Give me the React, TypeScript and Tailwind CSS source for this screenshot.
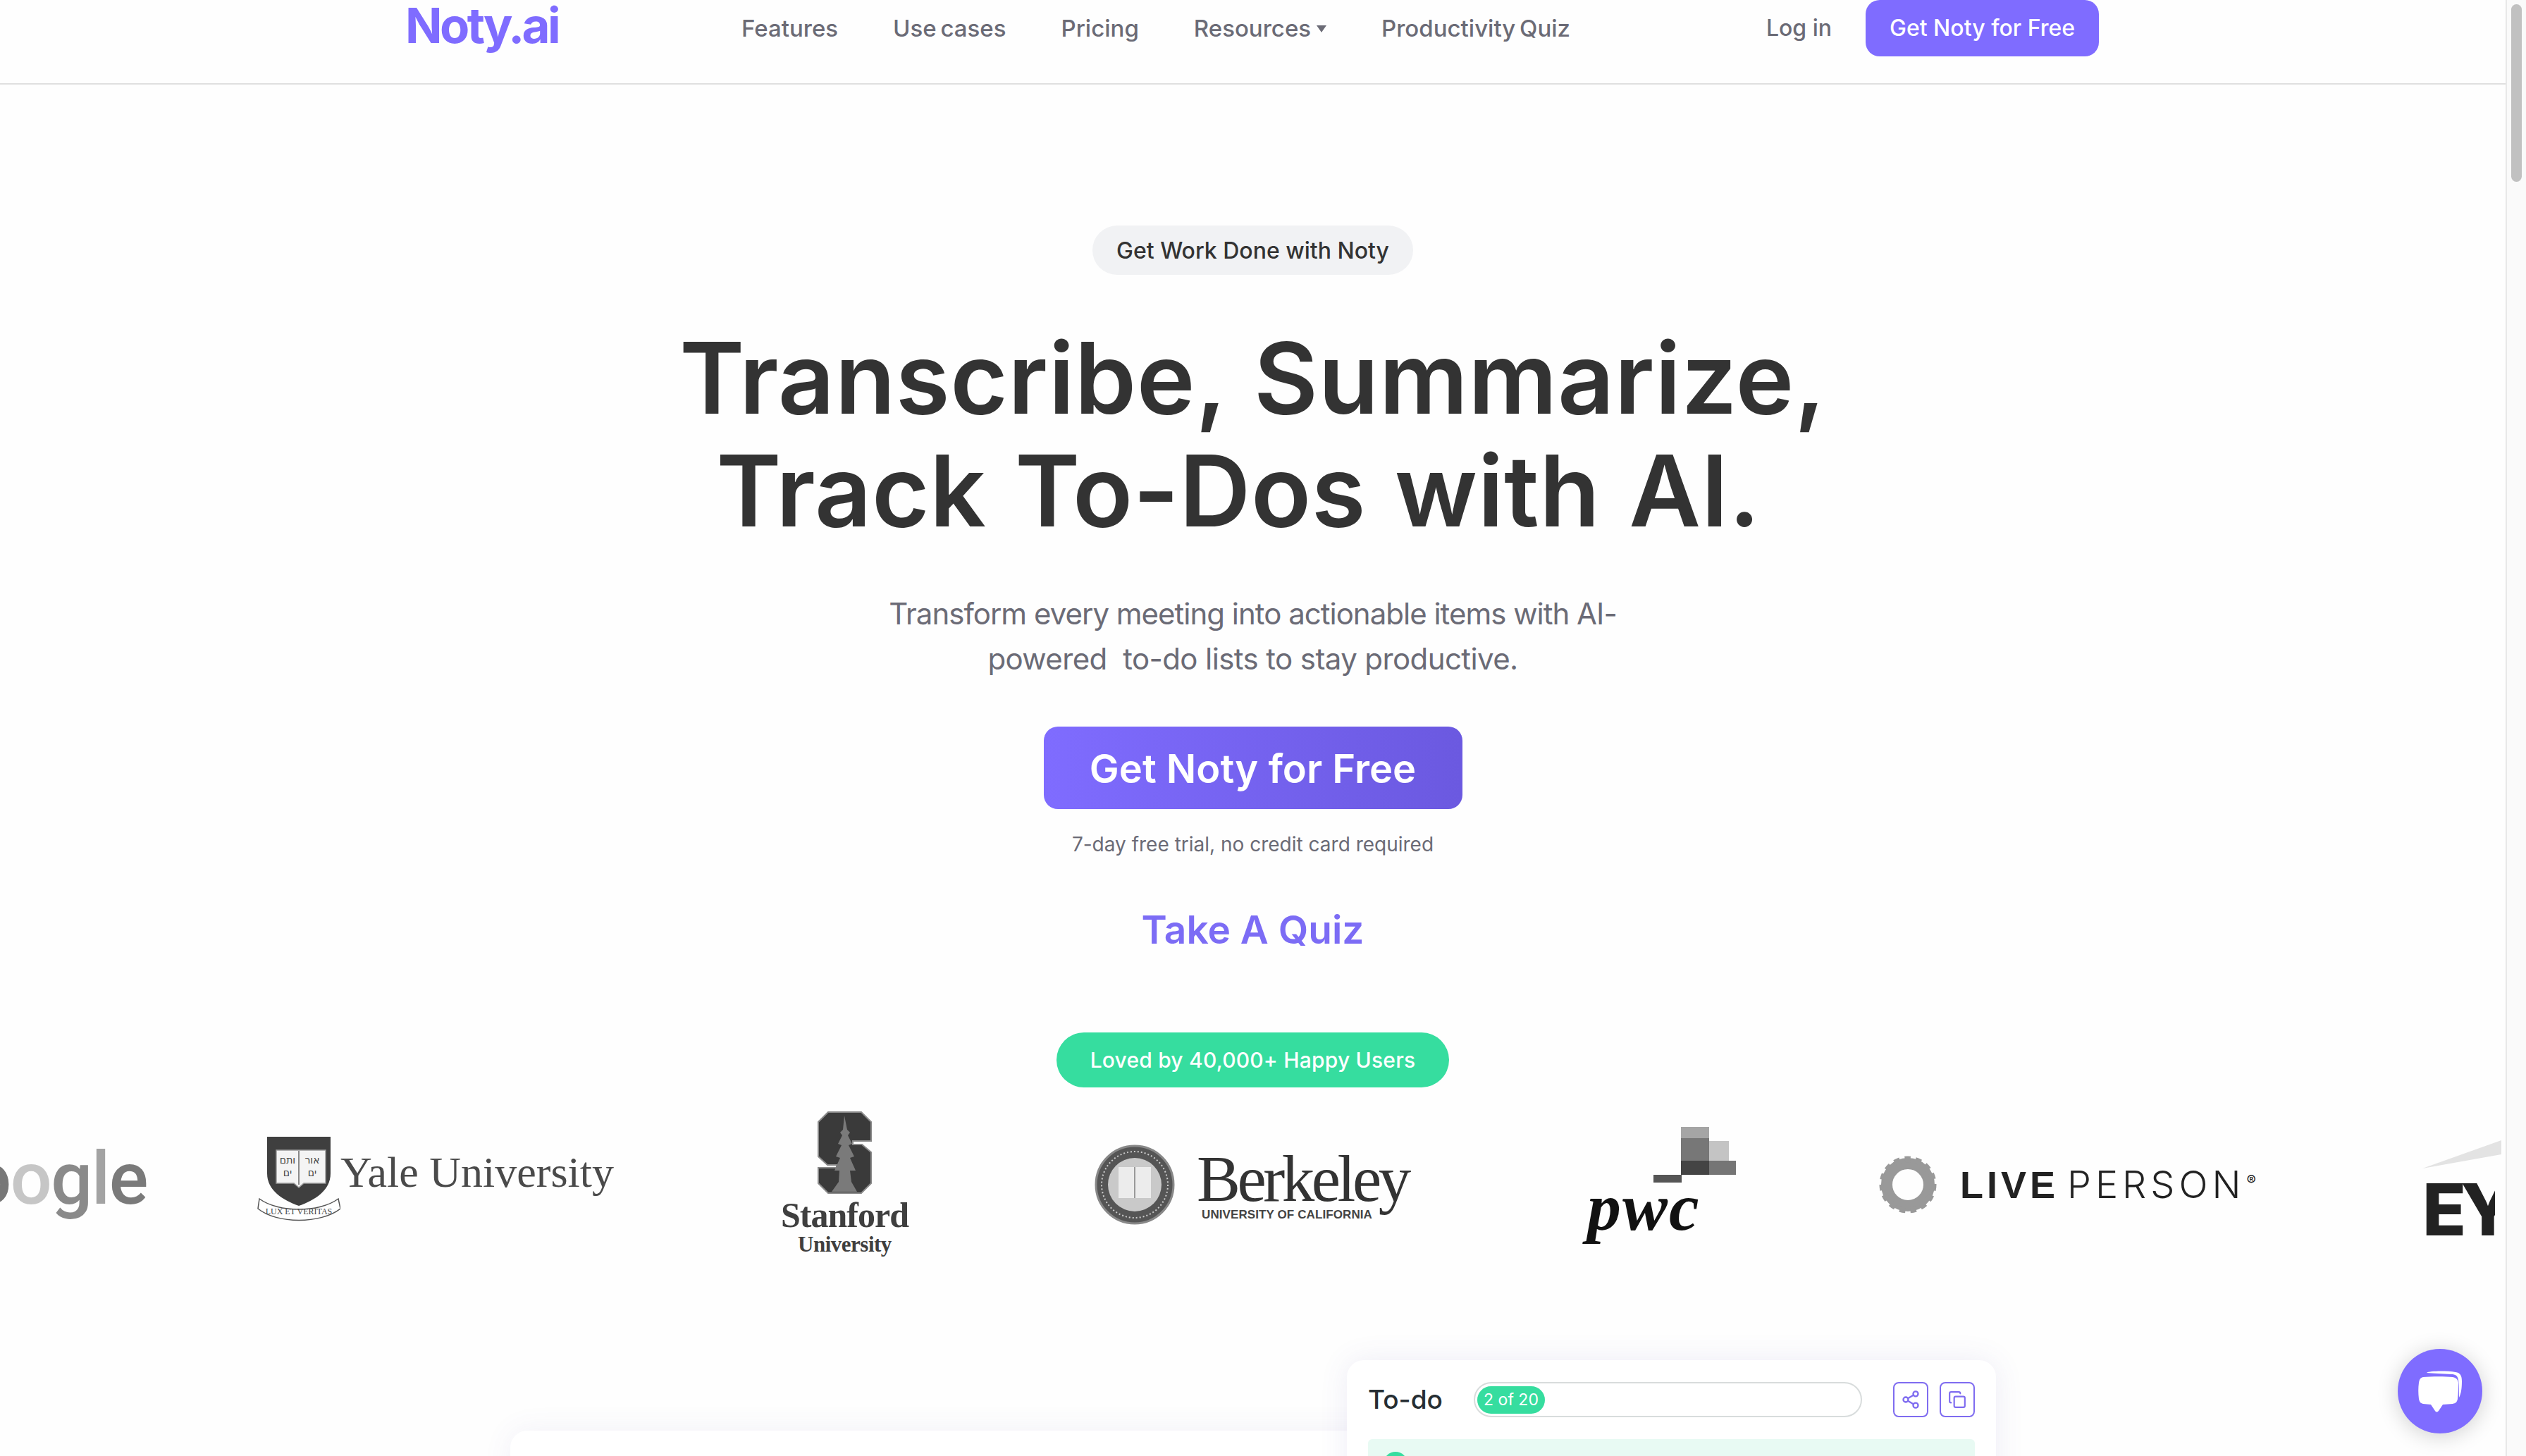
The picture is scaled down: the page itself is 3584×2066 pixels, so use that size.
import { Copy, Share2 } from 'lucide-react';

const navLinks = ['Features', 'Use cases', 'Pricing', 'Resources', 'Productivity Quiz'];

function Header() {
  return (
    <header className="flex h-[120px] items-start border-b-2 border-[#e0e0e0]">
      <div className="ml-[575px] w-[477px] text-[69px] font-bold leading-[72px] tracking-[-3.6px] text-[#7f6cff]">Noty.ai</div>
      <nav className="flex h-[82px] items-center gap-[78px] text-[33px] font-medium text-[#6b6b76] [word-spacing:-3px]">
        {navLinks.map((link) => (
          <a key={link} className="flex items-center gap-[8px]">
            {link}
            {link === 'Resources' && (
              <svg width="14" height="10" viewBox="0 0 14 10">
                <path d="M0 0H14L7 10Z" fill="#6b6b76" />
              </svg>
            )}
          </a>
        ))}
      </nav>
      <div className="ml-auto mr-[577px] flex h-[80px] items-center gap-[48px]">
        <a className="text-[32px] font-medium text-[#6b6b76]">Log in</a>
        <a className="flex h-[80px] w-[331px] items-center justify-center rounded-[20px] bg-[#7f6cff] text-[32px] font-medium text-white">
          Get Noty for Free
        </a>
      </div>
    </header>
  );
}

function Hero() {
  return (
    <section className="flex flex-col items-center text-center">
      <div className="mt-[200px] flex h-[70px] w-[455px] items-center justify-center rounded-full bg-[#f1f2f4] pt-[2px] text-[32px] font-medium text-[#333]">
        Get Work Done with Noty
      </div>
      <h1 className="mt-[66px] text-[140px] font-semibold leading-[160px] tracking-[0.5px] text-[#333] [word-spacing:5px]">
        Transcribe, Summarize,
        <br />
        Track To-Dos with AI.{'\u00a0'}
      </h1>
      <p className="mt-[63px] text-[42px] leading-[64px] tracking-[-1px] text-[#6b6b76]">
        Transform every meeting into actionable items with AI-
        <br />
        <span className="tracking-[-0.6px]">powered{'\u00a0'} to-do lists to stay productive.</span>
      </p>
      <a className="mt-[64px] flex h-[117px] w-[594px] items-center justify-center rounded-[20px] bg-linear-to-r from-[#7f6cff] to-[#6b59e0] pt-[2px] text-[56px] font-semibold text-white">
        Get Noty for Free
      </a>
      <p className="mt-[30px] text-[28px] leading-[40px] text-[#6b6b76]">7-day free trial, no credit card required</p>
      <a className="mt-[65px] text-[55px] font-semibold leading-[72px] text-[#7c6cf5]">Take A Quiz</a>
      <div className="mt-[110px] flex h-[78px] w-[557px] items-center justify-center rounded-full bg-[#36dd9f] text-[30px] font-medium tracking-[0.2px] text-white">
        Loved by 40,000+ Happy Users
      </div>
    </section>
  );
}

function GoogleLogo() {
  return (
    <div className="mt-[21px] flex w-[209px] shrink-0 justify-end overflow-hidden font-['Roboto',sans-serif] text-[104px] font-medium leading-[150px] tracking-[-1.5px]">
      <span className="text-[#777]">o</span>
      <span className="text-[#c6c6c6]">o</span>
      <span className="text-[#8a8a8a]">g</span>
      <span className="text-[#a3a3a3]">l</span>
      <span className="text-[#7a7a7a]">e</span>
    </div>
  );
}

function YaleLogo() {
  return (
    <div className="ml-[156px] mt-[36px] flex w-[510px] shrink-0 items-start">
      <svg width="118" height="122" viewBox="0 0 118 122" className="shrink-0">
        <path d="M14 0H104V52C104 76 82 90 59 98C36 90 14 76 14 52Z" fill="#3f3f3f" />
        <path d="M27 19H97V66H66L59 72L52 66H27Z" fill="#f4f4f4" stroke="#999" strokeWidth="1.5" />
        <line x1="59" y1="20" x2="59" y2="68" stroke="#666" strokeWidth="1.5" />
        <text x="43" y="38" fontSize="14" textAnchor="middle" fill="#444" fontFamily="'DejaVu Sans', sans-serif">ותם</text>
        <text x="78" y="38" fontSize="14" textAnchor="middle" fill="#444" fontFamily="'DejaVu Sans', sans-serif">אור</text>
        <text x="43" y="56" fontSize="14" textAnchor="middle" fill="#444" fontFamily="'DejaVu Sans', sans-serif">ים</text>
        <text x="78" y="56" fontSize="14" textAnchor="middle" fill="#444" fontFamily="'DejaVu Sans', sans-serif">ים</text>
        <path d="M3 88C30 108 88 108 115 88L118 102C90 124 28 124 1 102Z" fill="#fff" stroke="#555" strokeWidth="1.5" />
        <text x="59" y="110" fontSize="12" textAnchor="middle" fill="#444" fontFamily="'Liberation Serif', serif">LUX ET VERITAS</text>
      </svg>
      <span className="mt-[13px] whitespace-nowrap font-['Liberation_Serif',serif] text-[62px] leading-[74px] text-[#4a4a4a]">Yale University</span>
    </div>
  );
}

function StanfordLogo() {
  return (
    <div className="ml-[235px] flex w-[177px] shrink-0 flex-col items-center font-['Liberation_Serif',serif] text-[#3f3f3f]">
      <svg width="78" height="118" viewBox="0 0 78 118">
        <path d="M15 1H62L76 15V42H50V47H63L76 58V102L62 116H15L1 102V80H27V76H14L1 64V15Z" fill="#3a3a3a" stroke="#8a8a8a" strokeWidth="2" />
        <path d="M38 6L42 26L46 30L43 34L49 46L44 48L52 64L46 66L54 84L46 84L48 100L56 114H20L30 100L31 84L24 84L32 66L26 64L34 48L29 46L35 34L32 30L36 26Z" fill="#7a7a7a" />
      </svg>
      <span className="mt-[4px] whitespace-nowrap text-[50px] font-bold leading-[50px] tracking-[-1px]">Stanford</span>
      <span className="-mt-[1px] whitespace-nowrap text-[31px] font-bold leading-[36px] tracking-[-0.5px]">University</span>
    </div>
  );
}

function BerkeleyLogo() {
  return (
    <div className="ml-[266px] mt-[47px] flex w-[447px] shrink-0 items-start">
      <svg width="114" height="114" viewBox="0 0 114 114" className="shrink-0">
        <circle cx="57" cy="57" r="55" fill="#555" stroke="#888" strokeWidth="3" />
        <circle cx="57" cy="57" r="47" fill="none" stroke="#ccc" strokeWidth="2" strokeDasharray="2 3" />
        <circle cx="57" cy="57" r="38" fill="#c9c9c9" />
        <rect x="34" y="32" width="46" height="44" fill="#ececec" />
        <line x1="57" y1="32" x2="57" y2="76" stroke="#999" strokeWidth="2" />
      </svg>
      <div className="ml-[31px] mt-[8px] flex flex-col font-['Liberation_Serif',serif] text-[#333]">
        <span className="whitespace-nowrap text-[93px] leading-[82px] tracking-[-4.5px]">Berkeley</span>
        <span className="ml-[7px] whitespace-nowrap font-['Liberation_Sans',sans-serif] text-[17px] font-bold leading-[20px] tracking-[0.1px] text-[#444]">UNIVERSITY OF CALIFORNIA</span>
      </div>
    </div>
  );
}

function PwcLogo() {
  return (
    <div className="ml-[252px] mt-[22px] flex w-[211px] shrink-0 flex-col">
      <svg width="211" height="80" viewBox="2 0 211 80">
        <rect x="135" y="0" width="40" height="66" fill="#777" />
        <rect x="135" y="0" width="40" height="16" fill="#a5a5a5" />
        <rect x="175" y="20" width="28" height="32" fill="#c4c4c4" />
        <rect x="175" y="48" width="38" height="20" fill="#757575" />
        <rect x="135" y="48" width="40" height="20" fill="#444" />
        <rect x="96" y="68" width="40" height="11" fill="#555" />
      </svg>
      <span className="-mt-[12px] font-['Liberation_Serif',serif] text-[96px] font-bold italic leading-[92px] tracking-[2px] text-[#111]">pwc</span>
    </div>
  );
}

function LivePersonLogo() {
  return (
    <div className="ml-[203px] mt-[63px] flex w-[529px] shrink-0 items-center">
      <svg width="82" height="82" viewBox="0 0 82 82" className="shrink-0">
        <circle cx="41" cy="41" r="30" fill="none" stroke="#999" strokeWidth="16" />
        <circle cx="41" cy="41" r="36" fill="none" stroke="#999" strokeWidth="9" strokeDasharray="8 7" />
      </svg>
      <span className="ml-[33px] whitespace-nowrap text-[54px] leading-[60px] text-[#222]">
        <span className="font-['Liberation_Sans',sans-serif] font-bold tracking-[5px]">LIVE</span>
        <span className="ml-[12px] font-light tracking-[6px]">PERSON</span>
        <sup className="ml-[2px] align-[8px] text-[20px]">®</sup>
      </span>
    </div>
  );
}

function EyLogo() {
  return (
    <div className="ml-[242px] mt-[41px] flex w-[112px] shrink-0 flex-col overflow-hidden">
      <svg width="112" height="48" viewBox="0 0 112 48" className="shrink-0">
        <path d="M0 40L112 0V20Z" fill="#e3e3e3" />
      </svg>
      <div className="w-[103px] overflow-hidden text-[102px] font-extrabold leading-[100px] tracking-[-8px] text-[#222]">EY</div>
    </div>
  );
}

function LogoRow() {
  return (
    <div className="mt-[34px] flex h-[210px] items-start overflow-hidden">
      <GoogleLogo />
      <YaleLogo />
      <StanfordLogo />
      <BerkeleyLogo />
      <PwcLogo />
      <LivePersonLogo />
      <EyLogo />
    </div>
  );
}

function TodoCard() {
  return (
    <div className="absolute left-[1911px] top-[100px] h-[300px] w-[921px] rounded-[24px] bg-white px-[30px] pt-[30px] shadow-[0_0_40px_rgba(90,80,170,0.1)]">
      <div className="flex h-[52px] items-center">
        <span className="w-[150px] text-[37px] font-medium text-[#262e33]">To-do</span>
        <div className="flex h-[50px] w-[551px] items-center rounded-full border-2 border-[#d8dcdc] px-[3px]">
          <span className="flex h-[39px] w-[96px] items-center justify-center rounded-full bg-[#36dd9f] text-[23px] text-white">2 of 20</span>
        </div>
        <button className="ml-[44px] flex h-[50px] w-[50px] items-center justify-center rounded-[8px] border-2 border-[#7f6cf0] text-[#7f6cf0]">
          <Share2 size={28} />
        </button>
        <button className="ml-[16px] flex h-[50px] w-[50px] items-center justify-center rounded-[8px] border-2 border-[#7f6cf0] text-[#7f6cf0]">
          <Copy size={26} />
        </button>
      </div>
      <div className="mt-[30px] h-[100px] rounded-[6px] bg-[#e8faf3] px-[22px] pt-[18px]">
        <div className="h-[34px] w-[34px] rounded-full bg-[#36dd9f]" />
      </div>
    </div>
  );
}

function DemoSection() {
  return (
    <section className="relative mt-[43px] pt-[200px]">
      <div className="ml-[724px] h-[200px] w-[1700px] rounded-[24px] bg-white shadow-[0_0_40px_rgba(90,80,170,0.08)]" />
      <TodoCard />
    </section>
  );
}

function ChatBubble() {
  return (
    <button className="absolute left-[3402px] top-[1914px] h-[120px] w-[120px] rounded-full bg-[#7f6cff] shadow-[0_4px_30px_rgba(0,0,0,0.18)]">
      <svg width="120" height="120" viewBox="0 0 120 120">
        <path d="M41 34C45 31 70 31 82 33C89 34 91 38 91 46C91 55 90 64 87 69C87 60 87 50 86 44C85 38 82 36 76 36C65 35 50 35 41 34Z" fill="#fff" />
        <path d="M36 40C48 39 68 39 78 40C83 41 85 43 86 48C86 55 86 63 85 71C84 76 82 77 78 78L64 79L58 88Q55 91 53 88L47 79L36 78C32 77 31 75 30 71C29 63 29 55 30 48C31 43 32 41 36 40Z" fill="#fff" />
      </svg>
    </button>
  );
}

export default function App() {
  return (
    <div className="relative flex h-[2066px] w-[3584px] overflow-hidden bg-[#fefefe] font-['Inter',sans-serif]">
      <main className="w-[3555px] shrink-0 overflow-hidden">
        <Header />
        <Hero />
        <LogoRow />
        <DemoSection />
      </main>
      <div className="flex-1 border-l-2 border-[#e8e8e8] bg-[#fafafa] pl-[6px] pt-[6px]">
        <div className="h-[252px] w-[15px] rounded-full bg-[#c1c1c1]" />
      </div>
      <ChatBubble />
    </div>
  );
}
